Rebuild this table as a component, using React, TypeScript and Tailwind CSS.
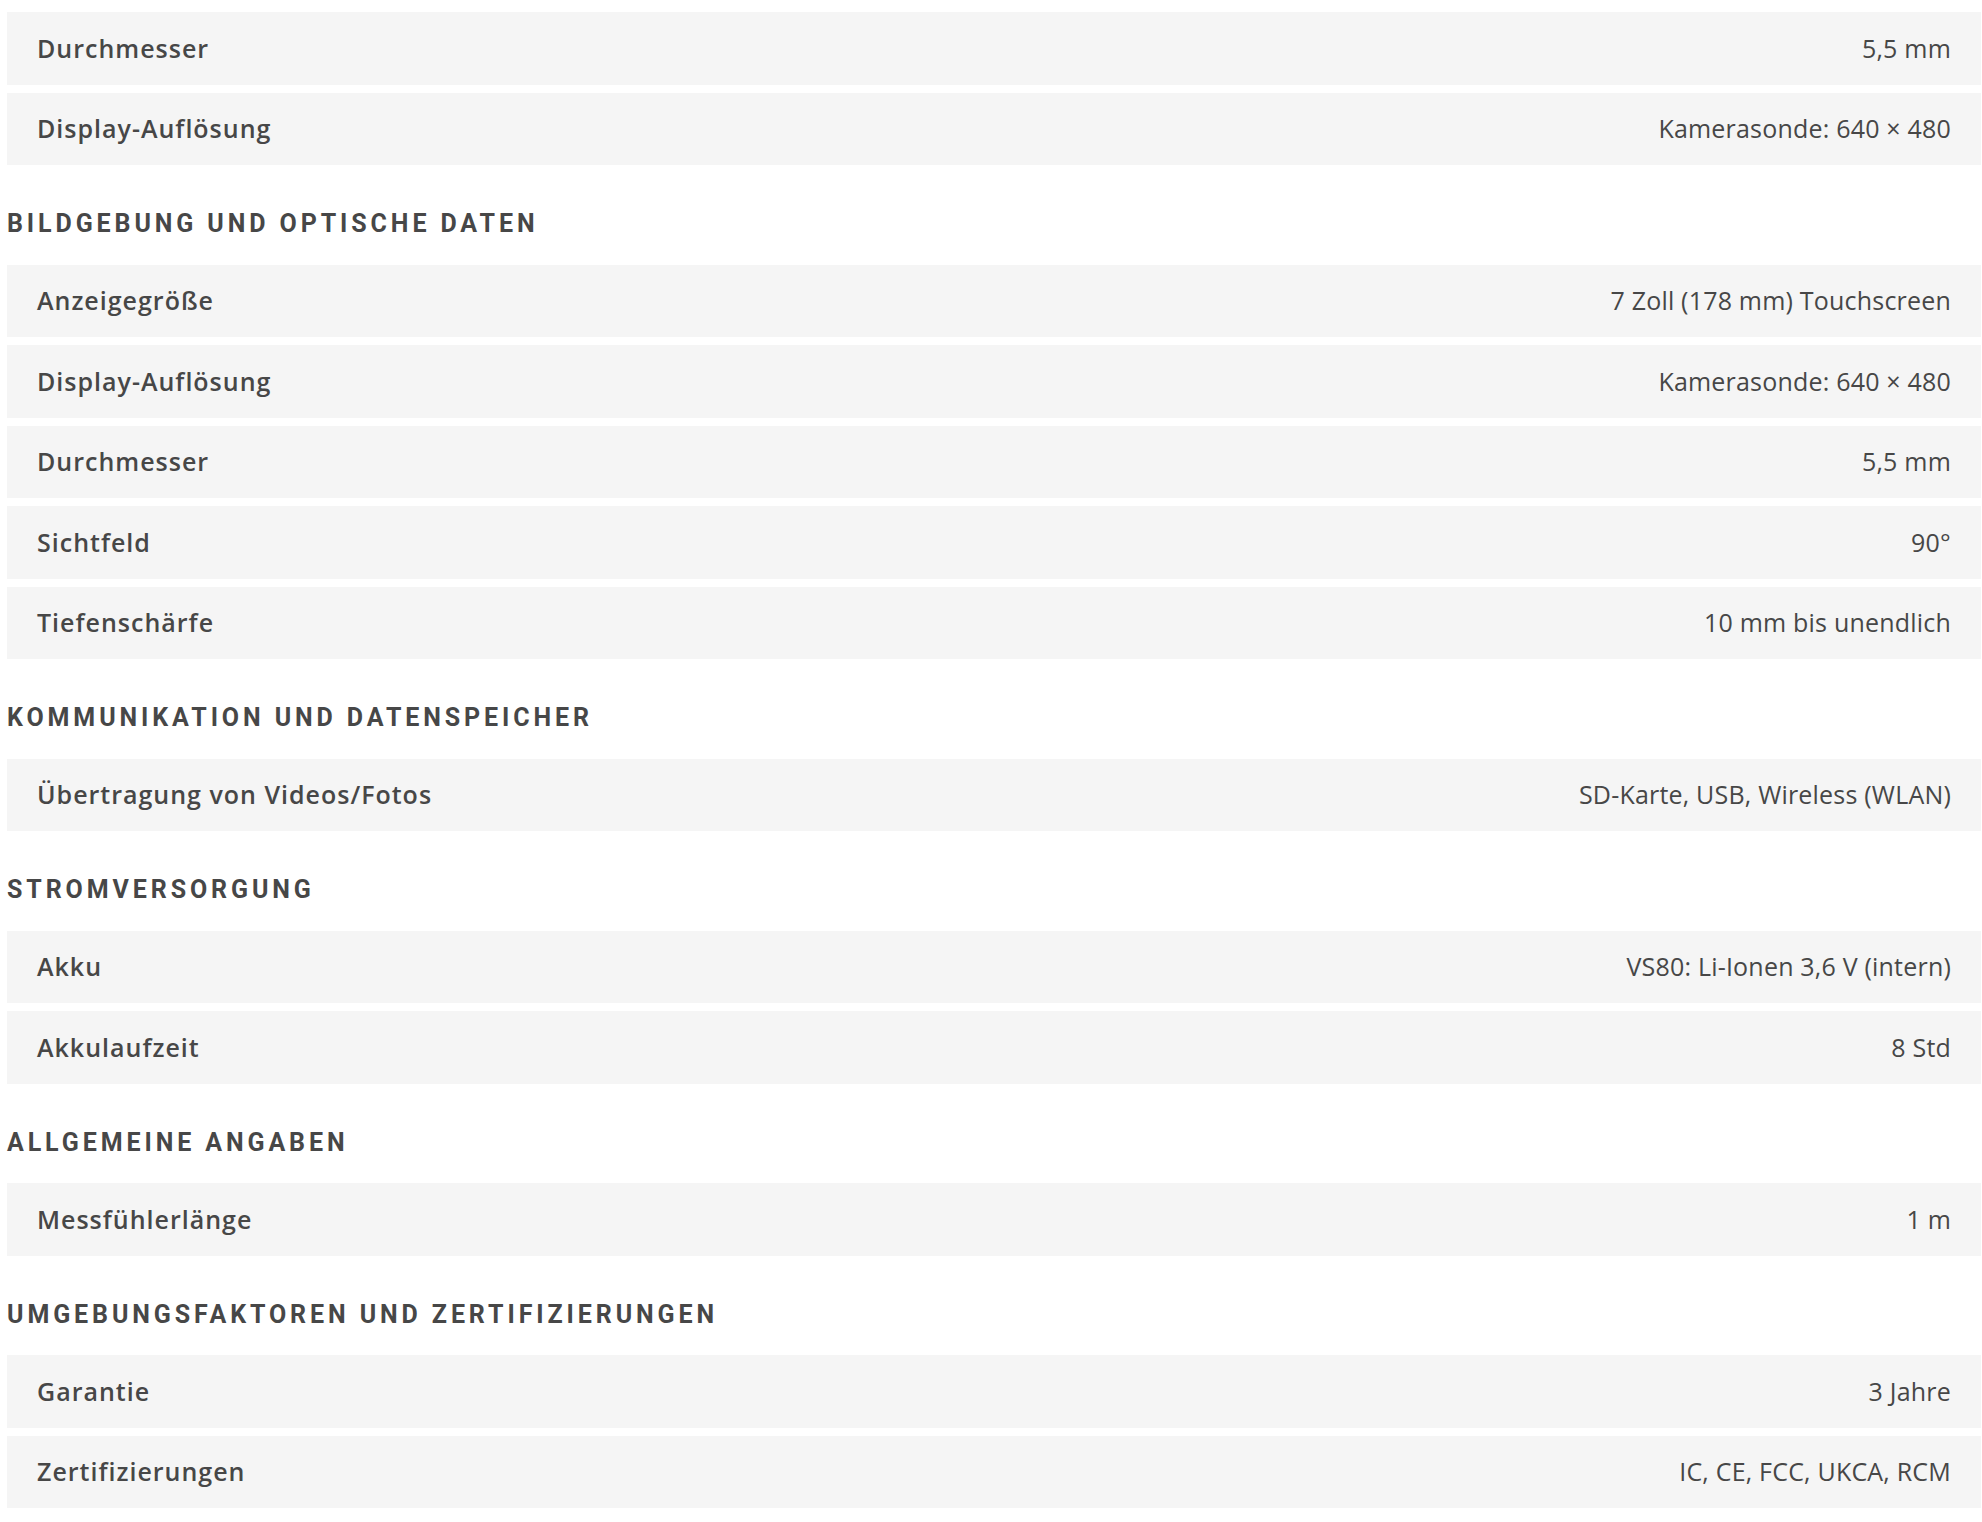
const SECTIONS: { title?: string; rows: [string, string][] }[] = [
  {
    rows: [
      ["Durchmesser", "5,5 mm"],
      ["Display-Auflösung", "Kamerasonde: 640 × 480"],
    ],
  },
  {
    title: "Bildgebung und optische Daten",
    rows: [
      ["Anzeigegröße", "7 Zoll (178 mm) Touchscreen"],
      ["Display-Auflösung", "Kamerasonde: 640 × 480"],
      ["Durchmesser", "5,5 mm"],
      ["Sichtfeld", "90°"],
      ["Tiefenschärfe", "10 mm bis unendlich"],
    ],
  },
  {
    title: "Kommunikation und Datenspeicher",
    rows: [["Übertragung von Videos/Fotos", "SD-Karte, USB, Wireless (WLAN)"]],
  },
  {
    title: "Stromversorgung",
    rows: [
      ["Akku", "VS80: Li-Ionen 3,6 V (intern)"],
      ["Akkulaufzeit", "8 Std"],
    ],
  },
  {
    title: "Allgemeine Angaben",
    rows: [["Messfühlerlänge", "1 m"]],
  },
  {
    title: "Umgebungsfaktoren und Zertifizierungen",
    rows: [
      ["Garantie", "3 Jahre"],
      ["Zertifizierungen", "IC, CE, FCC, UKCA, RCM"],
    ],
  },
];

function SpecRow({ label, value }: { label: string; value: string }) {
  return (
    <div className="flex h-[72.5px] items-center justify-between bg-[#f5f5f5] px-[30px] text-[25px] text-[#474747] font-['Open_Sans',sans-serif]">
      <span className="font-semibold tracking-[1px]">{label}</span>
      <span className="font-normal tracking-[0.2px]">{value}</span>
    </div>
  );
}

export default function App() {
  return (
    <div className="min-h-screen bg-white pt-[12px] pl-[7px] pr-[1px] pb-[14px]">
      {SECTIONS.map((section, i) => (
        <section key={i}>
          {section.title && (
            <h2 className="mt-[47px] mb-[28.5px] h-[24px] text-[25px] leading-[24px] font-bold uppercase tracking-[3.9px] text-[#474747] font-['Roboto',sans-serif]">
              {section.title}
            </h2>
          )}
          <div className="flex flex-col gap-[8px]">
            {section.rows.map(([label, value]) => (
              <SpecRow key={label} label={label} value={value} />
            ))}
          </div>
        </section>
      ))}
    </div>
  );
}
